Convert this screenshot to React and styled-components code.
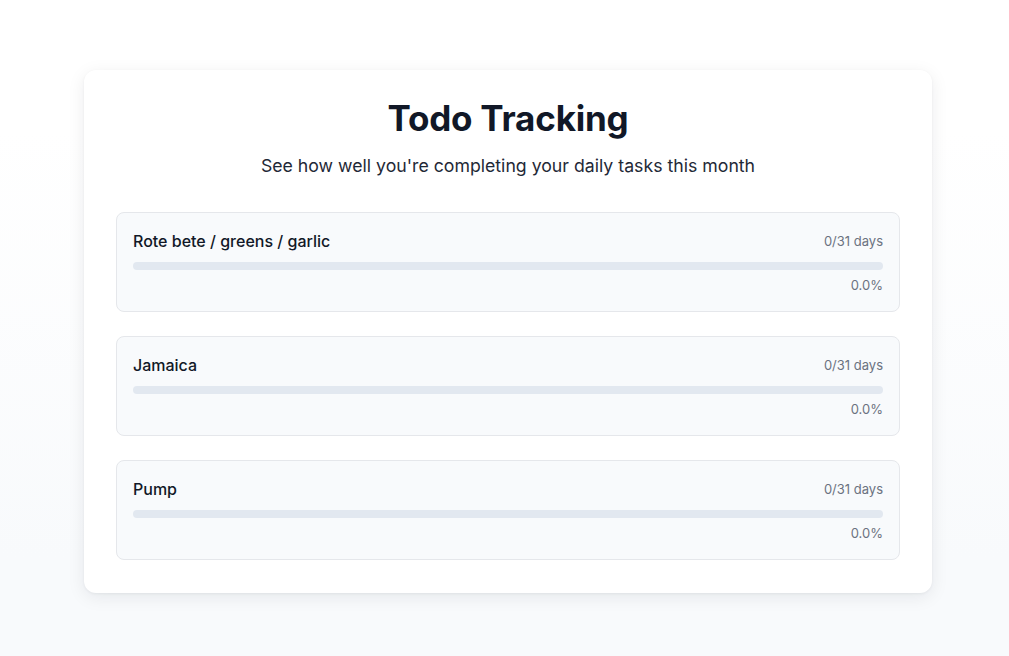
import React from 'react';
import styled, { createGlobalStyle } from 'styled-components';

const GlobalStyle = createGlobalStyle`
  html, body {
    margin: 0;
    padding: 0;
  }
  body {
    font-family: 'Inter', 'Noto Sans', sans-serif;
    color: #111827;
    background: linear-gradient(to bottom, #ffffff 0%, #ffffff 20%, #f8fafc 85%, #f8fafc 100%);
    min-height: 656px;
  }
`;

const Page = styled.div`
  min-height: 656px;
  display: flex;
  justify-content: center;
  align-items: flex-start;
  padding: 70px 0 0 7px;
  box-sizing: border-box;
`;

const Card = styled.div`
  width: 848px;
  box-sizing: border-box;
  background: #ffffff;
  border-radius: 12px;
  box-shadow: 0 4px 18px rgba(15, 23, 42, 0.08), 0 1px 3px rgba(15, 23, 42, 0.05);
  padding: 28px 32px 33px;
`;

const Title = styled.h1`
  margin: 0;
  text-align: center;
  font-size: 35px;
  line-height: 40px;
  font-weight: 700;
  color: #111827;
  letter-spacing: -0.2px;
`;

const Subtitle = styled.p`
  margin: 14px 0 0;
  text-align: center;
  font-size: 17.7px;
  line-height: 28px;
  color: #1f2937;
`;

const List = styled.div`
  margin-top: 32px;
  display: flex;
  flex-direction: column;
  gap: 24px;
`;

const Item = styled.div`
  background: #f8fafc;
  border: 1px solid #e5e7eb;
  border-radius: 8px;
  padding: 16px;
`;

const Row = styled.div`
  display: flex;
  justify-content: space-between;
  align-items: center;
`;

const Name = styled.span`
  font-size: 16px;
  line-height: 24px;
  font-weight: 500;
  color: #111827;
`;

const Days = styled.span`
  font-size: 13px;
  line-height: 20px;
  color: #6b7280;
`;

const Track = styled.div`
  margin-top: 9px;
  height: 8px;
  border-radius: 9999px;
  background: #e2e8f0;
  overflow: hidden;
`;

const Fill = styled.div`
  height: 100%;
  background: #3b82f6;
  border-radius: 9999px;
`;

const Percent = styled.div`
  margin-top: 5px;
  text-align: right;
  font-size: 13px;
  line-height: 20px;
  color: #6b7280;
`;

const todos = [
  { name: 'Rote bete / greens / garlic', done: 0, total: 31 },
  { name: 'Jamaica', done: 0, total: 31 },
  { name: 'Pump', done: 0, total: 31 },
];

export default function App() {
  return (
    <>
      <GlobalStyle />
      <Page>
        <Card>
          <Title>Todo Tracking</Title>
          <Subtitle>See how well you're completing your daily tasks this month</Subtitle>
          <List>
            {todos.map((t) => {
              const pct = (t.done / t.total) * 100;
              return (
                <Item key={t.name}>
                  <Row>
                    <Name>{t.name}</Name>
                    <Days>{t.done}/{t.total} days</Days>
                  </Row>
                  <Track>
                    <Fill style={{ width: `${pct}%` }} />
                  </Track>
                  <Percent>{pct.toFixed(1)}%</Percent>
                </Item>
              );
            })}
          </List>
        </Card>
      </Page>
    </>
  );
}
